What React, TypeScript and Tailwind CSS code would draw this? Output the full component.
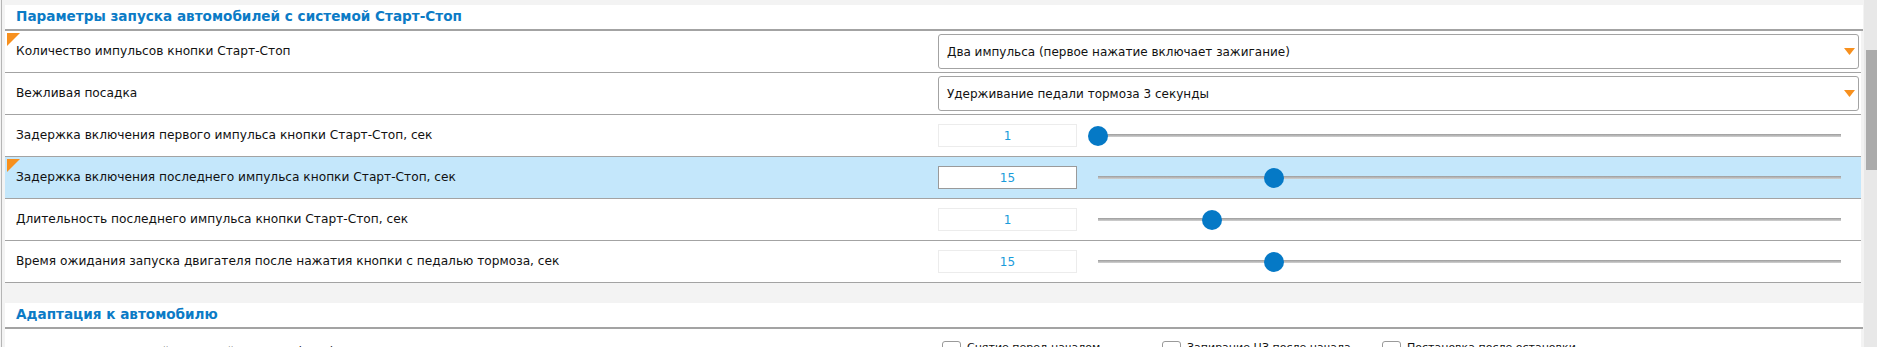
const rows = [
  { label: "Количество импульсов кнопки Старт-Стоп", kind: "select", value: "Два импульса (первое нажатие включает зажигание)", changed: true },
  { label: "Вежливая посадка", kind: "select", value: "Удерживание педали тормоза 3 секунды" },
  { label: "Задержка включения первого импульса кнопки Старт-Стоп, сек", kind: "slider", value: "1", pos: 0 },
  { label: "Задержка включения последнего импульса кнопки Старт-Стоп, сек", kind: "slider", value: "15", pos: 23.7, changed: true, active: true },
  { label: "Длительность последнего импульса кнопки Старт-Стоп, сек", kind: "slider", value: "1", pos: 15.3 },
  { label: "Время ожидания запуска двигателя после нажатия кнопки с педалью тормоза, сек", kind: "slider", value: "15", pos: 23.7 },
];

const checks = [
  "Снятие перед началом движения",
  "Запирание ЦЗ после начала движения",
  "Постановка после остановки двигателя",
];

function SectionHeader({ title }: { title: string }) {
  return (
    <div className="h-[26px] bg-white border-b-2 border-[#a3a3a3] flex items-center pl-[11px]">
      <span className="text-[13.6px] font-bold text-[#0b7bc6] leading-none">{title}</span>
    </div>
  );
}

function Corner() {
  return <div className="absolute left-[2px] top-[2px] w-0 h-0 border-t-[13px] border-t-[#f7901e] border-r-[13px] border-r-transparent" />;
}

function Select({ value }: { value: string }) {
  return (
    <div className="h-[35px] flex-1 mr-[2px] bg-white border border-[#a3a3a3] rounded-[3px] flex items-center pl-[8px] pr-[3px]">
      <span className="flex-1 text-[12px] text-[#111]">{value}</span>
      <svg width="11" height="7" viewBox="0 0 11 7">
        <path d="M0 0H11L5.5 7Z" fill="#f7901e" />
      </svg>
    </div>
  );
}

function Slider({ value, pos, active }: { value: string; pos: number; active?: boolean }) {
  return (
    <div className="flex-1 flex items-center">
      <div
        className={
          active
            ? "w-[139px] h-[23px] bg-white border border-[#9a9a9a] flex items-center justify-center text-[12px] text-[#1a9bdb]"
            : "w-[139px] h-[23px] bg-white border border-[#ececec] flex items-center justify-center text-[12px] text-[#1a9bdb]"
        }
      >
        {value}
      </div>
      <div className="relative ml-[21px] mr-[20px] flex-1 h-[3px] bg-linear-to-b from-[#9c9c9c] to-[#d2d2d2]">
        <div
          className="absolute top-1/2 w-[20px] h-[20px] -translate-x-1/2 -translate-y-1/2 rounded-full bg-[#0579c6]"
          style={{ left: `${pos}%` }}
        />
      </div>
    </div>
  );
}

export default function App() {
  return (
    <div className="flex h-[347px] w-full overflow-hidden bg-[#f3f3f3] font-['DejaVu_Sans',sans-serif]">
      <div className="flex-1 ml-px border-l border-[#b5b5b5] pl-[3px] pr-px pt-[5px]">
        <SectionHeader title="Параметры запуска автомобилей с системой Старт-Стоп" />
        <div className="mr-[2px]">
          {rows.map((r) => (
            <div
              key={r.label}
              className={
                r.active
                  ? "relative h-[42px] flex items-center border-b border-[#a3a3a3] bg-[#c4e7fb]"
                  : "relative h-[42px] flex items-center border-b border-[#a3a3a3] bg-white"
              }
            >
              {r.changed && <Corner />}
              <div className="w-[933px] pl-[11px] text-[12.2px] text-[#111]">{r.label}</div>
              {r.kind === "select" ? (
                <Select value={r.value} />
              ) : (
                <Slider value={r.value} pos={r.pos ?? 0} active={r.active} />
              )}
            </div>
          ))}
        </div>

        <div className="mt-[20px]">
          <SectionHeader title="Адаптация к автомобилю" />
          <div className="mr-[2px] h-[60px] bg-white flex items-start">
            <div className="w-[933px] pl-[11px] pt-[14px] text-[12.2px] text-[#111]">Наличие и тип штатной охранной системы (с ЦЗ)</div>
            <div className="flex pt-[12px] pl-[4px]">
              {checks.map((c) => (
                <div key={c} className="w-[220px] flex items-start gap-[6px]">
                  <div className="w-[19px] h-[19px] shrink-0 rounded-[3px] border border-[#9a9a9a] bg-white" />
                  <div className="w-[170px] text-[11px] leading-[14px] text-[#111]">{c}</div>
                </div>
              ))}
            </div>
          </div>
        </div>
      </div>
      <div className="w-[13px] bg-[#e8e8e8] pt-[50px] pl-[2px]">
        <div className="w-[11px] h-[120px] bg-[#ababab]" />
      </div>
    </div>
  );
}
